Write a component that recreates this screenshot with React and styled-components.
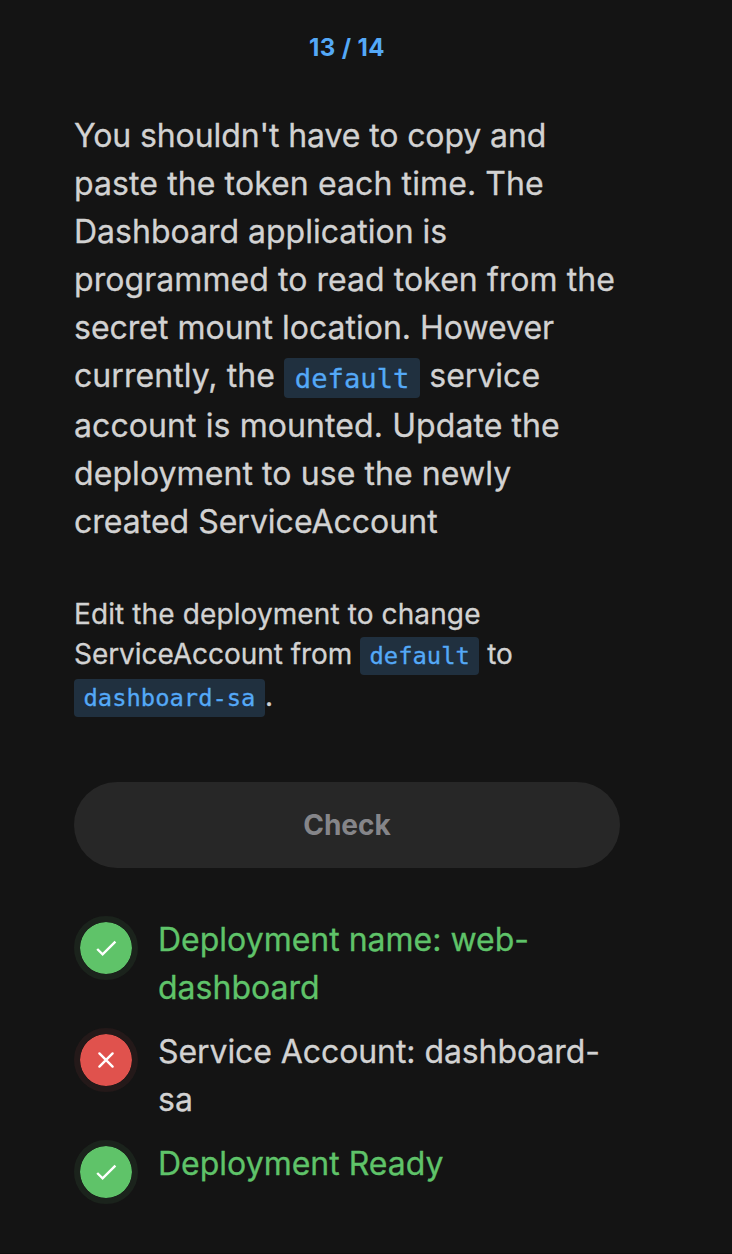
import React from "react";
import styled, { createGlobalStyle } from "styled-components";

const Global = createGlobalStyle`
  * { box-sizing: border-box; }
  body {
    margin: 0; background: #141414; font-family: Inter, sans-serif; color: #d2d2d2;
    -webkit-font-smoothing: antialiased;
  }
`;
const Page = styled.main`
  width: 732px; height: 1254px; padding: 32px 112px 0 74px; background: #141414;
  overflow: hidden; border-bottom: 1px solid #0e0e0e;
`;
const Progress = styled.div`
  text-align: center; font-size: 24px; line-height: 32px; font-weight: 700; color: #54a9f7;
  letter-spacing: 0.4px;
`;
const Question = styled.p`
  margin: 48px 0 0; font-size: 32px; line-height: 48px; -webkit-text-stroke: 0.3px;
`;
const Hint = styled.p`
  margin: 48px 0 0; font-size: 28px; line-height: 40px; -webkit-text-stroke: 0.3px;
`;
const Line = styled.span`
  letter-spacing: ${(p) => p.$track || 0}px;
`;
const Code = styled.code`
  font-family: "DejaVu Sans Mono", monospace; font-size: 0.85em; letter-spacing: 0;
  color: #54a9f7; background: #20303f; border-radius: 4px; padding: ${(p) => p.$padY}px 0.4em;
`;
const Check = styled.button`
  display: block; width: 100%; height: 86px; margin-top: 64px; border: 0; border-radius: 43px;
  background: #272727; color: #858589; font: 700 28px/40px Inter, sans-serif;
`;
const Results = styled.ul`
  list-style: none; margin: 48px 0 0; padding: 0; display: flex; flex-direction: column; gap: 16px;
`;
const Result = styled.li`
  display: flex; gap: 20px; font-size: 32px; line-height: 48px; -webkit-text-stroke: 0.3px;
  color: ${(p) => (p.$ok ? "#5fc369" : "#d2d2d2")};
`;
const Badge = styled.span`
  flex: none; width: 64px; height: 64px; border-radius: 50%;
  border: 6px solid ${(p) => (p.$ok ? "#1b231c" : "#241919")};
  background: ${(p) => (p.$ok ? "#5fc369" : "#e0524d")}; background-clip: padding-box;
  display: grid; place-items: center;
`;
function Item({ ok, children }) {
  return (
    <Result $ok={ok}>
      <Badge $ok={ok}>
        <svg width="24" height="24" viewBox="0 0 24 24" fill="none" stroke="#fff" strokeWidth="2.4">
          <path
            d={ok ? "M3.2 13l5.4 5.4L21.4 5.6" : "M5.4 5.4l13.2 13.2M18.6 5.4L5.4 18.6"}
            strokeLinecap={ok ? "butt" : "round"}
          />
        </svg>
      </Badge>
      <span>{children}</span>
    </Result>
  );
}
export default function App() {
  return (
    <>
      <Global />
      <Page>
        <Progress>13 / 14</Progress>
        <Question>
          <Line $track={-0.1}>You shouldn't have to copy and</Line><br />
          <Line $track={0.1}>paste the token each time. The</Line><br />
          <Line>Dashboard application is</Line><br />
          <Line $track={0.06}>programmed to read token from the</Line><br />
          <Line>secret mount location. However</Line><br />
          <Line $track={0.06}>currently, the <Code $padY={4.5}>default</Code></Line> service<br />
          <Line $track={0.09}>account is mounted. Update the</Line><br />
          <Line $track={0.08}>deployment to use the newly</Line><br />
          <Line>created ServiceAccount</Line>
        </Question>
        <Hint>
          <Line $track={0.11}>Edit the deployment to change</Line><br />
          <Line $track={-0.05}>ServiceAccount from <Code $padY={5}>default</Code> to</Line><br />
          <Code $padY={5}>dashboard-sa</Code>.
        </Hint>
        <Check>Check</Check>
        <Results>
          <Item ok>Deployment name: web-<br />dashboard</Item>
          <Item><Line $track={-0.08}>Service Account: dashboard-</Line><br />sa</Item>
          <Item ok>Deployment Ready</Item>
        </Results>
      </Page>
    </>
  );
}
